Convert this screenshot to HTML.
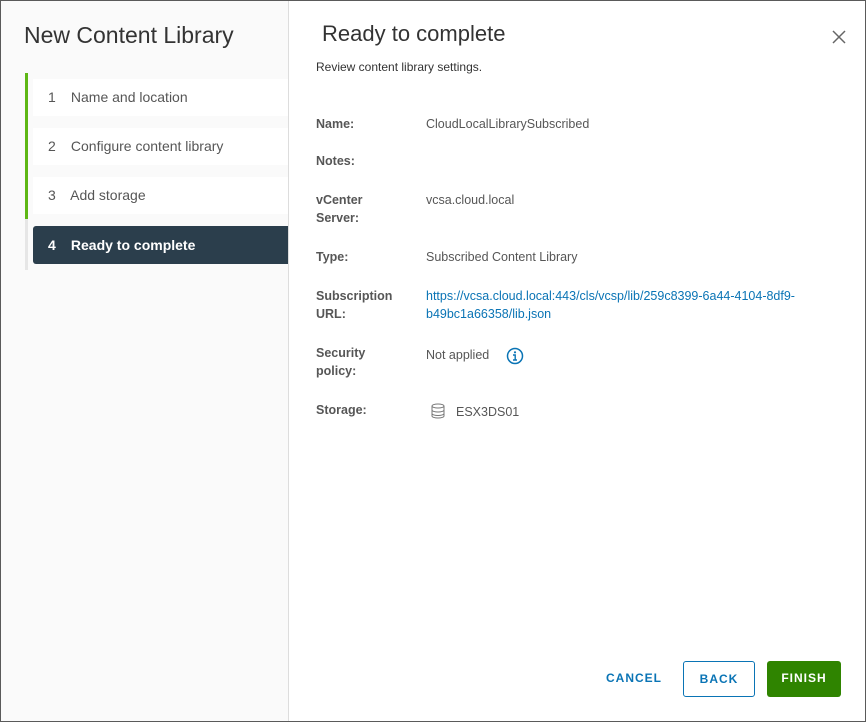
<!DOCTYPE html>
<html><head><style>
*{margin:0;padding:0;box-sizing:border-box}
body{width:866px;height:722px;overflow:hidden;background:#fff;font-family:"Liberation Sans",sans-serif;position:relative}
.frame{position:absolute;left:0;top:0;width:866px;height:722px;border:1px solid #5a5a5a}
.left{position:absolute;left:1px;top:1px;width:288px;height:720px;background:#fafafa;border-right:1px solid #ddd}
.title{position:absolute;left:24px;top:22px;font-size:23px;color:#333}
.bar{position:absolute;left:25px;width:3px}
.step{position:absolute;left:33px;width:255px;height:37px;background:#fff;font-size:14px;color:#565656;line-height:37px;padding-left:15px}
.step b{font-weight:normal;display:inline-block;width:19px}
.step.act{background:#2b3e4c;color:#fff;font-weight:bold;border-radius:3px 0 0 3px}
.step.act b{font-weight:bold}
h2{position:absolute;left:322px;top:21px;font-size:22px;font-weight:normal;color:#333}
.sub{position:absolute;left:316px;top:60px;font-size:12px;color:#333}
.lbl{position:absolute;left:316px;font-size:12.5px;font-weight:bold;color:#565656;line-height:18px}
.val{position:absolute;left:426px;font-size:12.5px;color:#565656;line-height:18px}
a{color:#0a74b5;text-decoration:none}
.btn{position:absolute;top:661px;height:36px;font-size:12px;font-weight:bold;letter-spacing:1px;line-height:34px;text-align:center;border-radius:3px}
</style></head><body>
<div class="left"></div>
<div class="title">New Content Library</div>
<div class="bar" style="top:73px;height:146px;background:#5eb715"></div>
<div class="bar" style="top:219px;height:51px;background:#e6e6e6"></div>
<div class="step" style="top:79px"><b>1</b> Name and location</div>
<div class="step" style="top:128px"><b>2</b> Configure content library</div>
<div class="step" style="top:177px"><b>3</b> Add storage</div>
<div class="step act" style="top:226px;height:38px;line-height:38px"><b>4</b> Ready to complete</div>
<h2>Ready to complete</h2>
<svg style="position:absolute;left:832px;top:30px" width="14" height="14" viewBox="0 0 14 14"><path d="M1 1L13 13M13 1L1 13" stroke="#666" stroke-width="1.5"/></svg>
<div class="sub">Review content library settings.</div>
<div class="lbl" style="top:115px">Name:</div><div class="val" style="top:115px">CloudLocalLibrarySubscribed</div>
<div class="lbl" style="top:152px">Notes:</div>
<div class="lbl" style="top:191px">vCenter<br>Server:</div><div class="val" style="top:191px">vcsa.cloud.local</div>
<div class="lbl" style="top:248px">Type:</div><div class="val" style="top:248px">Subscribed Content Library</div>
<div class="lbl" style="top:287px">Subscription<br>URL:</div><div class="val" style="top:287px"><a>https://vcsa.cloud.local:443/cls/vcsp/lib/259c8399-6a44-4104-8df9-<br>b49bc1a66358/lib.json</a></div>
<div class="lbl" style="top:344px">Security<br>policy:</div><div class="val" style="top:346px">Not applied</div>
<svg style="position:absolute;left:506px;top:347px" width="18" height="18" viewBox="0 0 18 18"><circle cx="9" cy="9" r="7.5" fill="none" stroke="#0a74b5" stroke-width="1.5"/><circle cx="9" cy="5.3" r="1.1" fill="#0a74b5"/><path d="M7 8h2.2v5M7 13h4" stroke="#0a74b5" stroke-width="1.4" fill="none"/></svg>
<div class="lbl" style="top:401px">Storage:</div>
<svg style="position:absolute;left:431px;top:403px" width="14" height="16" viewBox="0 0 14 16"><ellipse cx="7" cy="3" rx="6" ry="2" fill="none" stroke="#777"/><path d="M1 3v10c0 1.1 2.7 2 6 2s6-.9 6-2V3M1 7c0 1.1 2.7 2 6 2s6-.9 6-2M1 10.5c0 1.1 2.7 2 6 2s6-.9 6-2" fill="none" stroke="#777"/></svg>
<div class="val" style="top:403px;left:456px">ESX3DS01</div>
<div class="btn" style="left:595px;width:78px;color:#0a74b5">CANCEL</div>
<div class="btn" style="left:683px;width:72px;color:#0a74b5;border:1px solid #0a74b5">BACK</div>
<div class="btn" style="left:767px;width:74px;color:#fff;background:#2f8400">FINISH</div>
<div class="frame"></div>
</body></html>
